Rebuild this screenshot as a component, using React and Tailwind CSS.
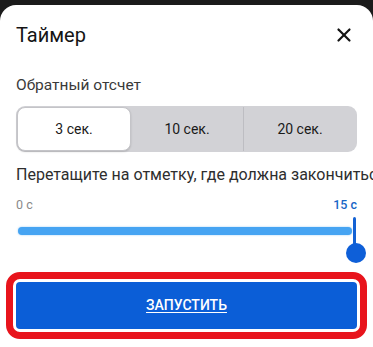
import { X } from 'lucide-react'

const segments = ['3 сек.', '10 сек.', '20 сек.']

export default function App() {
  return (
    <div className="h-[347px] w-[373px] overflow-hidden bg-[#1b1b1b] pt-[5px] font-['Roboto',sans-serif]">
      <div className="h-[360px] rounded-t-[16px] bg-white">
        {/* Заголовок */}
        <div className="flex items-center justify-between px-4 pt-4">
          <h1 className="text-[20px] leading-7 text-[#141414]">Таймер</h1>
          <X className="mr-[2px] h-[22px] w-[22px] text-[#141414]" strokeWidth={2.4} />
        </div>

        <p className="mt-[26px] px-4 text-[15.5px] leading-5 text-[#3a3a3a]">Обратный отсчет</p>

        {/* Сегменты */}
        <div className="mx-4 mt-[11px] flex h-[46px] rounded-[9px] bg-[#d2d2d6] p-[1px]">
          {segments.map((s, i) => (
            <div
              key={s}
              className={
                i === 0
                  ? 'flex flex-1 items-center justify-center rounded-[8px] border border-[#c4c4c8] bg-white text-[14px] text-[#1a1a1a] shadow-[0_1px_2px_rgba(0,0,0,0.15)]'
                  : i === 2
                  ? 'flex flex-1 items-center justify-center border-l border-[#bdbdc2] text-[14px] text-[#1a1a1a]'
                  : 'flex flex-1 items-center justify-center text-[14px] text-[#1a1a1a]'
              }
            >
              {s}
            </div>
          ))}
        </div>

        <p className="mt-[13px] whitespace-nowrap pl-4 text-[16px] leading-5 text-[#2e2e2e]">
          Перетащите на отметку, где должна закончиться
        </p>

        {/* Слайдер */}
        <div className="mt-[12px] flex justify-between px-4 text-[12.5px] leading-4">
          <span className="text-[#8a8a8a]">0 с</span>
          <span className="font-medium text-[#1766c6]">15 с</span>
        </div>
        <div className="relative mx-[18px] mt-[4px] h-[48px]">
          <div className="absolute left-0 right-[3px] top-[10px] h-[8px] rounded-full bg-[#46a4f2] shadow-[0_0_2px_rgba(70,164,242,0.6)]" />
          <div className="absolute right-[-1px] top-0 h-[36px] w-[3px] rounded-full bg-[#1462d4]" />
          <div className="absolute right-[-11px] top-[26px] h-[20px] w-[20px] rounded-full bg-[#0e5fd8]" />
        </div>

        {/* Кнопка */}
        <div className="mx-[6px] mt-[7px] rounded-[14px] border-[7px] border-[#e8141c] p-[3px]">
          <button
            type="button"
            className="flex h-[47px] w-full items-center justify-center rounded-[4px] bg-[#0b5ed7] text-[14px] font-medium text-white underline underline-offset-2"
          >
            ЗАПУСТИТЬ
          </button>
        </div>
      </div>
    </div>
  )
}
